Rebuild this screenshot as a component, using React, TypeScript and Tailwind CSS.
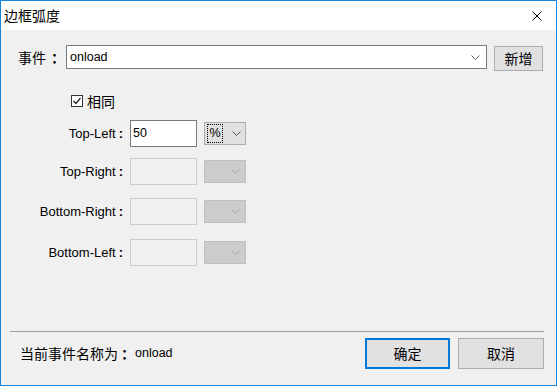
import React from "react";

const latin = "font-['Liberation_Sans','Noto_Sans_CJK_SC',sans-serif]";
const cjk = "font-['Noto_Sans_CJK_SC','Liberation_Sans',sans-serif]";

const Chevron = ({ color }: { color: string }) => (
  <svg width="9" height="5" viewBox="0 0 9 5" className="block">
    <path d="M0.5 0.5 L4.5 4.5 L8.5 0.5" fill="none" stroke={color} strokeWidth="1" />
  </svg>
);

const corners = [
  { label: "Top-Left", enabled: true, mt: "mt-[12px]" },
  { label: "Top-Right", enabled: false, mt: "mt-[11px]" },
  { label: "Bottom-Right", enabled: false, mt: "mt-[13px]" },
  { label: "Bottom-Left", enabled: false, mt: "mt-[14px]" },
];

const CornerRow = ({ label, enabled, mt }: { label: string; enabled: boolean; mt: string }) => (
  <div className={`flex flex-row items-center h-[27px] ${mt}`}>
    <div className={`w-[122px] text-right text-[13px] text-black ${latin}`}>
      {label}
      <span className="ml-[3px] font-bold">:</span>
    </div>
    {enabled ? (
      <div className="ml-[7px] w-[67px] h-[27px] bg-white border border-[#7a7a7a] flex items-center pl-[2px]">
        <span className={`text-[12.5px] text-black ${latin}`}>50</span>
      </div>
    ) : (
      <div className="ml-[7px] w-[67px] h-[27px] bg-[#f0f0f0] border border-[#cccccc]" />
    )}
    {enabled ? (
      <div className="ml-[7px] w-[42px] h-[23px] bg-[#e1e1e1] border border-[#adadad] flex flex-row items-center">
        <div className="ml-[2px] w-[16px] h-[19px] border border-dotted border-black flex items-center justify-center">
          <span className={`text-[12.5px] text-black ${latin}`}>%</span>
        </div>
        <div className="ml-[9px]">
          <Chevron color="#555" />
        </div>
      </div>
    ) : (
      <div className="ml-[7px] w-[42px] h-[23px] bg-[#cccccc] border border-[#bfbfbf] flex flex-row items-center justify-end pr-[5px]">
        <Chevron color="#a6a6a6" />
      </div>
    )}
  </div>
);

export default function App() {
  return (
    <div className="w-[557px] h-[386px] border border-[#1883d7] bg-[#f0f0f0] flex flex-col overflow-hidden">
      <div className="h-[29px] bg-white flex flex-row items-center justify-between pl-[3px] pr-[14px]">
        <span className={`text-[14px] text-black ${cjk}`}>边框弧度</span>
        <svg width="10" height="10" viewBox="0 0 10 10">
          <path d="M0.5 0.5 L9.5 9.5 M9.5 0.5 L0.5 9.5" stroke="#000" strokeWidth="1" />
        </svg>
      </div>

      <div className="flex-1 flex flex-col">
        <div className="flex flex-row items-start pt-[15px] pl-[17px]">
          <div className={`w-[48px] h-[24px] flex items-center text-[14px] text-black ${cjk}`}>
            事件<span className="ml-[5px] font-bold">：</span>
          </div>
          <div className="w-[421px] h-[24px] bg-white border border-[#7a7a7a] flex flex-row items-center justify-between pl-[3px] pr-[6px]">
            <span className={`text-[12.5px] text-black ${latin}`}>onload</span>
            <Chevron color="#606060" />
          </div>
          <button className={`ml-[7px] mt-[1px] w-[49px] h-[25px] bg-[#e1e1e1] border border-[#adadad] text-[14px] text-black ${cjk}`}>
            新增
          </button>
        </div>

        <div className="flex flex-row items-center mt-[23px] pl-[70px] h-[14px]">
          <div className="w-[12px] h-[12px] bg-white border border-[#333] flex items-center justify-center">
            <svg width="10" height="10" viewBox="0 0 10 10">
              <path d="M1.5 5 L4 7.5 L8.5 2" fill="none" stroke="#222" strokeWidth="1.2" />
            </svg>
          </div>
          <span className={`ml-[4px] text-[14px] text-black ${cjk}`}>相同</span>
        </div>

        {corners.map((c) => (
          <CornerRow key={c.label} label={c.label} enabled={c.enabled} mt={c.mt} />
        ))}

        <div className="flex-1" />

        <div className="ml-[9px] mr-[12px] h-[1px] bg-[#a0a0a0]" />

        <div className="mt-[6px] mb-[16px] h-[31px] flex flex-row items-center pl-[19px] pr-[12px]">
          <div className="flex-1 flex flex-row items-center">
            <span className={`text-[14px] text-black ${cjk}`}>当前事件名称为</span>
            <span className={`ml-[3px] text-[14px] font-bold text-black ${cjk}`}>：</span>
            <span className={`text-[12.5px] text-black ${latin}`}>onload</span>
          </div>
          <button className={`w-[85px] h-[31px] bg-[#e1e1e1] border-2 border-[#0078d7] text-[14px] text-black ${cjk}`}>
            确定
          </button>
          <button className={`ml-[8px] w-[86px] h-[31px] bg-[#e1e1e1] border border-[#adadad] text-[14px] text-black ${cjk}`}>
            取消
          </button>
        </div>
      </div>
    </div>
  );
}
